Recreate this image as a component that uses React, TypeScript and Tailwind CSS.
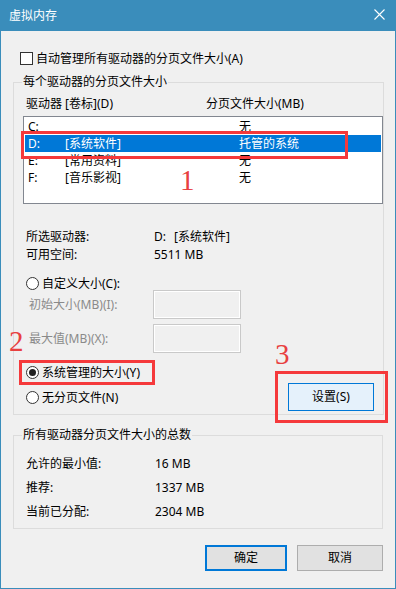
import type { ReactNode } from 'react';

const DRIVES = [
  { letter: 'C:', label: '', size: '无', selected: false },
  { letter: 'D:', label: '[系统软件]', size: '托管的系统', selected: true },
  { letter: 'E:', label: '[常用资料]', size: '无', selected: false },
  { letter: 'F:', label: '[音乐影视]', size: '无', selected: false },
];

const TOTALS = [
  ['允许的最小值:', '16 MB'],
  ['推荐:', '1337 MB'],
  ['当前已分配:', '2304 MB'],
];

const Radio = ({ checked, children }: { checked?: boolean; children: ReactNode }) => (
  <div className="flex items-center h-[13px]">
    <span className="w-[13px] h-[13px] rounded-full border border-[#333] bg-white flex items-center justify-center">
      {checked && <span className="w-[7px] h-[7px] rounded-full bg-[#222]" />}
    </span>
    <span className="ml-[3px]">{children}</span>
  </div>
);

const SizeInput = ({ label }: { label: string }) => (
  <div className="flex items-center h-[29px]">
    <span className="w-[139px] pl-[15px] text-[#8a8a8a]">{label}</span>
    <div className="w-[88px] h-[29px] border border-[#c9c9c9] bg-[#f0f0f0] shadow-[inset_0_0_0_1px_#ffffff]" />
  </div>
);

export default function App() {
  return (
    <div className="w-[396px] h-[589px] relative overflow-hidden bg-[#f0f0f0] border-x border-b border-[#3a8dbb] flex flex-col text-[12px] leading-none text-black font-['Noto_Sans','Noto_Sans_CJK_SC',sans-serif]">
      {/* Title bar */}
      <div className="h-[31px] shrink-0 bg-[#3a8dbb] text-white flex items-center justify-between pl-[8px] pr-[10px]">
        <span>虚拟内存</span>
        <svg width="11" height="11" viewBox="0 0 11 11" className="mb-[2px]">
          <path d="M0.5 0.5 L10.5 10.5 M10.5 0.5 L0.5 10.5" stroke="#fff" strokeWidth="1.1" />
        </svg>
      </div>

      <div className="px-[12px]">
        <div className="flex items-center h-[13px] mt-[21px] ml-[7px]">
          <span className="w-[13px] h-[13px] border border-[#333] bg-white" />
          <span className="ml-[3px]">自动管理所有驱动器的分页文件大小(A)</span>
        </div>

        {/* Per-drive group */}
        <fieldset className="mt-[9px] border border-[#dcdcdc]">
          <legend className="ml-[8px] px-[1px] h-[16px] leading-[16px]">每个驱动器的分页文件大小</legend>
          <div className="mt-[6px] h-[16px] flex items-center pl-[12px]">
            <span className="w-[180px]">驱动器 [卷标](D)</span>
            <span>分页文件大小(MB)</span>
          </div>
          <div className="mt-[4px] ml-[9px] w-[360px] h-[88px] border border-[#828790] bg-white pt-[1px]">
            {DRIVES.map((d) => (
              <div
                key={d.letter}
                className={`mx-[1px] h-[17px] grid grid-cols-[37px_174px_1fr] items-center pl-[3px] ${
                  d.selected ? 'bg-[#0078d7] text-white' : ''
                }`}
              >
                <span>{d.letter}</span>
                <span>{d.label}</span>
                <span>{d.size}</span>
              </div>
            ))}
          </div>

          <div className="mt-[24px] pl-[12px]">
            <div className="h-[18px] flex items-center">
              <span className="w-[128px]">所选驱动器:</span>
              <span>D:</span>
              <span className="ml-[8px]">[系统软件]</span>
            </div>
            <div className="h-[18px] flex items-center">
              <span className="w-[128px]">可用空间:</span>
              <span>5511 MB</span>
            </div>
            <div className="mt-[13px]">
              <Radio>自定义大小(C):</Radio>
            </div>
          </div>

          <div>
            <SizeInput label="初始大小(MB)(I):" />
            <div className="mt-[5px]">
              <SizeInput label="最大值(MB)(X):" />
            </div>
          </div>

          <div className="mt-[13px] flex items-start justify-between pl-[12px] pr-[9px] mb-[3px]">
            <div className="flex flex-col gap-[12px]">
              <Radio checked>系统管理的大小(Y)</Radio>
              <Radio>无分页文件(N)</Radio>
            </div>
            <button className="mt-[17px] w-[86px] h-[28px] border border-[#0078d7] bg-[#e5f1fb]">设置(S)</button>
          </div>
        </fieldset>

        {/* Totals group */}
        <fieldset className="mt-[12px] border border-[#dcdcdc]">
          <legend className="ml-[8px] px-[1px] h-[16px] leading-[16px]">所有驱动器分页文件大小的总数</legend>
          <div className="mt-[9px] pl-[12px] pb-[4px]">
            {TOTALS.map(([k, v]) => (
              <div key={k} className="h-[24px] flex items-center">
                <span className="w-[129px]">{k}</span>
                <span>{v}</span>
              </div>
            ))}
          </div>
        </fieldset>

        <div className="mt-[16px] flex gap-[10px] pl-[192px]">
          <button className="w-[86px] h-[26px] border-2 border-[#0078d7] bg-[#e1e1e1]">确定</button>
          <button className="w-[86px] h-[26px] border border-[#adadad] bg-[#e1e1e1] shrink-0">取消</button>
        </div>
      </div>

      {/* Red annotations */}
      <div className="absolute left-[20px] top-[131px] w-[327px] h-[28px] border-[3px] border-[#f5393b]" />
      <div className="absolute left-[179px] top-[166px] text-[29px] leading-none text-[#e8403f] font-['Liberation_Serif',serif]">1</div>
      <div className="absolute left-[8px] top-[327px] text-[29px] leading-none text-[#e8403f] font-['Liberation_Serif',serif]">2</div>
      <div className="absolute left-[18px] top-[360px] w-[136px] h-[25px] border-[3px] border-[#f5393b]" />
      <div className="absolute left-[274px] top-[340px] text-[29px] leading-none text-[#e8403f] font-['Liberation_Serif',serif]">3</div>
      <div className="absolute left-[274px] top-[371px] w-[113px] h-[52px] border-[3px] border-[#f5393b]" />
    </div>
  );
}
